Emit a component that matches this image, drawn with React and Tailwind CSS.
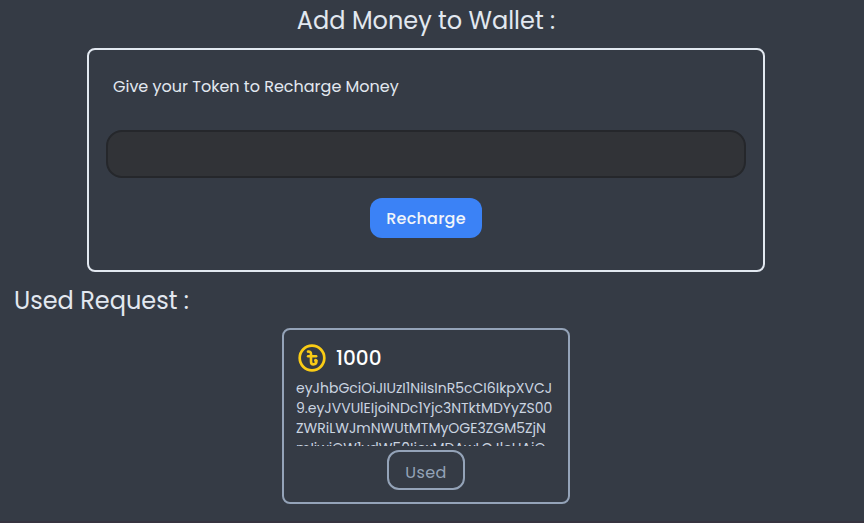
const tokenLines = [
  "eyJhbGciOiJIUzI1NiIsInR5cCI6IkpXVCJ",
  "9.eyJVVUlEIjoiNDc1Yjc3NTktMDYyZS00",
  "ZWRiLWJmNWUtMTMyOGE3ZGM5ZjN",
  "mIiwiQW1vdW50IjoxMDAwLCJleHAiO",
];

function TakaCoin() {
  return (
    <svg
      viewBox="0 0 32 32"
      className="size-8 text-[#facc15]"
      fill="none"
      stroke="currentColor"
      strokeWidth="2.7"
      strokeLinecap="round"
      strokeLinejoin="round"
      aria-hidden="true"
    >
      <circle cx="16" cy="16" r="12.3" />
      <path d="M12 9.6c1.9-.3 3 .7 3 2.4v7.4c0 1.9.9 3 2.4 3 1.9 0 3.1-1.6 3.1-3.6" strokeWidth="2.6" />
      <path d="M12 14.2h8.2" strokeWidth="2.4" />
      <circle cx="19.6" cy="18.4" r="1.6" fill="currentColor" stroke="none" />
    </svg>
  );
}

export default function App() {
  return (
    <div className="flex h-[523px] w-full flex-col overflow-hidden border-b-2 border-[#37343f] bg-[#353b45] pr-3 font-[Poppins,Inter,sans-serif] text-[#e2e8f0]">
      <h1 className="mt-[5px] text-center text-2xl leading-8">Add Money to Wallet :</h1>
      <section className="mx-auto mt-[11px] flex h-[224px] w-[678px] shrink-0 flex-col items-center rounded-lg border-2 border-[#e2e8f0] px-[17px]">
        <label className="mt-[25px] w-full pl-[7px] text-base leading-6">
          Give your Token to Recharge Money
        </label>
        <input className="mt-[31px] h-12 w-full shrink-0 rounded-2xl border-2 border-[#25272b] bg-[#313337] px-4 outline-none" />
        <button className="mt-5 h-10 w-28 shrink-0 rounded-xl bg-[#3b82f6] pt-px font-medium tracking-[0.25px] text-[#f1f5f9]">
          Recharge
        </button>
      </section>
      <h2 className="mt-[13px] pl-[14px] text-2xl leading-8">Used Request :</h2>
      <article className="mx-auto mt-[11px] flex h-44 w-72 shrink-0 flex-col items-center rounded-lg border-2 border-[#94a3b8] px-3 pt-3">
        <div className="flex w-full items-center gap-2 text-xl leading-8 font-medium text-white">
          <TakaCoin />
          <span>1000</span>
        </div>
        <div className="mt-1 h-[68px] w-full shrink-0 overflow-hidden text-sm leading-5 text-[#cbd5e1]">
          {tokenLines.map((line) => (
            <div key={line} className="whitespace-nowrap">
              {line}
            </div>
          ))}
        </div>
        <button className="mt-1 h-10 w-[78px] shrink-0 rounded-xl border-2 border-[#94a3b8] pt-[5px] tracking-[0.4px] text-[#94a3b8]">
          Used
        </button>
      </article>
    </div>
  );
}
